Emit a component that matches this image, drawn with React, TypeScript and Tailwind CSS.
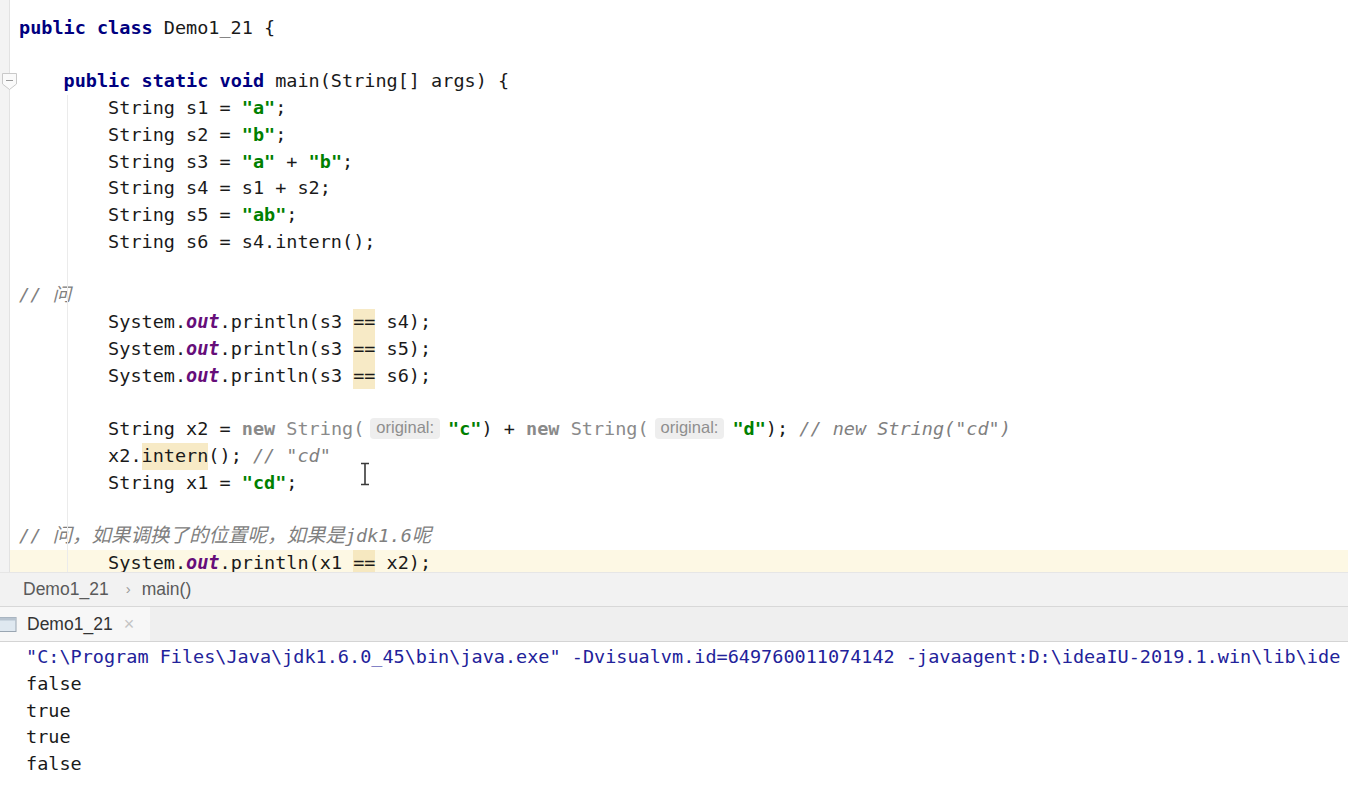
import React from "react";

const KW = "text-[#000080] font-bold";
const STR = "text-[#008000] font-bold";
const OUT = "text-[#660e7a] font-bold italic";
const CMT = "text-[#808080] italic";
const GRAY = "text-[#8a8a8a]";
const HL = "inline-block h-[26.75px] align-top bg-[#f7eac6]";

function Hint() {
  return (
    <span className="inline-flex items-start align-top h-[26.75px] pt-[2px] ml-[6px] mr-[8px]">
      <span className="flex items-center h-[21px] pb-[2px] px-[6px] rounded-[4px] bg-[#eeeeee] text-[#8e8e8e] text-[16.5px] leading-none font-['Liberation_Sans',Arial,sans-serif] not-italic font-normal">
        original:
      </span>
    </span>
  );
}

function Line({ children, current }: { children?: React.ReactNode; current?: boolean }) {
  return (
    <div
      className={
        "h-[26.75px] leading-[26.75px] whitespace-pre pl-[9px] " +
        (current ? "bg-[#fdf8e4]" : "")
      }
    >
      {children}
      {children ? null : " "}
    </div>
  );
}

export default function App() {
  return (
    <div className="w-[1348px] h-[798px] flex flex-col bg-white overflow-hidden font-['DejaVu_Sans_Mono','Noto_Sans_CJK_SC',monospace] text-[18.5px] text-[#1a1a1a]">
      {/* Editor */}
      <div className="relative h-[572px] flex shrink-0 overflow-hidden">
        <div className="w-[10px] shrink-0 bg-[#f3f3f3] border-r border-[#e2e2e2] relative">
          <svg className="absolute left-[2px] top-[73px]" width="15" height="17" viewBox="0 0 15 17">
            <path d="M0.5 0.5 H14.5 V11 L7.5 16.5 L0.5 11 Z" fill="#fafafa" stroke="#c9c9c9" />
            <path d="M4 7.5 H11" stroke="#9a9a9a" strokeWidth="1" />
          </svg>
        </div>
        <div className="flex-1 pt-[14.8px] relative">
          {/* indent guide */}
          <div className="absolute left-[57px] top-[95px] bottom-0 w-px bg-[#ebebeb]" />
          <Line>
            <span className={KW}>public class</span> Demo1_21 {"{"}
          </Line>
          <Line />
          <Line>
            {"    "}
            <span className={KW}>public static void</span> main(String[] args) {"{"}
          </Line>
          <Line>
            {"        String s1 = "}
            <span className={STR}>"a"</span>;
          </Line>
          <Line>
            {"        String s2 = "}
            <span className={STR}>"b"</span>;
          </Line>
          <Line>
            {"        String s3 = "}
            <span className={STR}>"a"</span> + <span className={STR}>"b"</span>;
          </Line>
          <Line>{"        String s4 = s1 + s2;"}</Line>
          <Line>
            {"        String s5 = "}
            <span className={STR}>"ab"</span>;
          </Line>
          <Line>{"        String s6 = s4.intern();"}</Line>
          <Line />
          <Line>
            <span className={CMT}>// 问</span>
          </Line>
          <Line>
            {"        System."}
            <span className={OUT}>out</span>.println(s3 <span className={HL}>==</span> s4);
          </Line>
          <Line>
            {"        System."}
            <span className={OUT}>out</span>.println(s3 <span className={HL}>==</span> s5);
          </Line>
          <Line>
            {"        System."}
            <span className={OUT}>out</span>.println(s3 <span className={HL}>==</span> s6);
          </Line>
          <Line />
          <Line>
            {"        String x2 = "}
            <span className={GRAY + " font-bold"}>new</span>
            <span className={GRAY}> String(</span>
            <Hint />
            <span className={STR}>"c"</span>) + <span className={GRAY + " font-bold"}>new</span>
            <span className={GRAY}> String(</span>
            <Hint />
            <span className={STR}>"d"</span>); <span className={CMT}>// new String("cd")</span>
          </Line>
          <Line>
            {"        x2."}
            <span className={HL}>intern</span>(); <span className={CMT}>// "cd"</span>
          </Line>
          <Line>
            {"        String x1 = "}
            <span className={STR}>"cd"</span>;
          </Line>
          <Line />
          <Line>
            <span className={CMT}>
              // <span className="text-[19.5px]">问，如果调换了的位置呢，如果是</span>jdk1.6
              <span className="text-[19.5px]">呢</span>
            </span>
          </Line>
          <Line current>
            {"        System."}
            <span className={OUT}>out</span>.println(x1 <span className="inline-block h-[26.75px] align-top bg-[#f6e8c0]">==</span> x2);
          </Line>
          {/* mouse I-beam cursor */}
          <svg className="absolute left-[348px] top-[462px]" width="14" height="24" viewBox="0 0 14 24">
            <path d="M3 1.5 H11 M7 1.5 V22.5 M3 22.5 H11" stroke="#3a3a3a" strokeWidth="1.6" fill="none" />
          </svg>
        </div>
      </div>

      {/* Breadcrumb */}
      <div className="h-[35px] shrink-0 bg-[#f2f2f2] border-t border-[#e6e6e6] border-b border-b-[#d8d8d8] flex items-center pl-[23px] font-['Liberation_Sans',Arial,sans-serif] text-[17.5px] text-[#5a5a5a]">
        <span>Demo1_21</span>
        <span className="ml-[17px] mr-[11px] text-[#9a9a9a] text-[15px]">›</span>
        <span>main()</span>
      </div>

      {/* Tab bar */}
      <div className="h-[35px] shrink-0 bg-[#efefef] border-b border-[#d4d4d4] flex items-stretch font-['Liberation_Sans',Arial,sans-serif]">
        <div className="w-[150px] bg-[#f7f7f7] flex items-center relative">
          <svg className="absolute left-0 top-[9px]" width="18" height="17" viewBox="0 0 18 17">
            <rect x="-4" y="1.5" width="20" height="14" fill="#dfe8f0" stroke="#9aa6b2" />
            <rect x="-4" y="1.5" width="20" height="3" fill="#b8c4d0" />
          </svg>
          <span className="ml-[27px] text-[17.5px] text-[#333333]">Demo1_21</span>
          <span className="ml-[11px] text-[18px] text-[#c4c4c4]">×</span>
        </div>
      </div>

      {/* Console */}
      <div className="flex-1 bg-white pl-[26px] pt-[2px] overflow-hidden">
        <div className="h-[26.75px] leading-[26.75px] whitespace-pre text-[#22229a]">
          "C:\Program Files\Java\jdk1.6.0_45\bin\java.exe" -Dvisualvm.id=649760011074142 -javaagent:D:\ideaIU-2019.1.win\lib\ide
        </div>
        <div className="h-[26.75px] leading-[26.75px]">false</div>
        <div className="h-[26.75px] leading-[26.75px]">true</div>
        <div className="h-[26.75px] leading-[26.75px]">true</div>
        <div className="h-[26.75px] leading-[26.75px]">false</div>
      </div>
    </div>
  );
}
